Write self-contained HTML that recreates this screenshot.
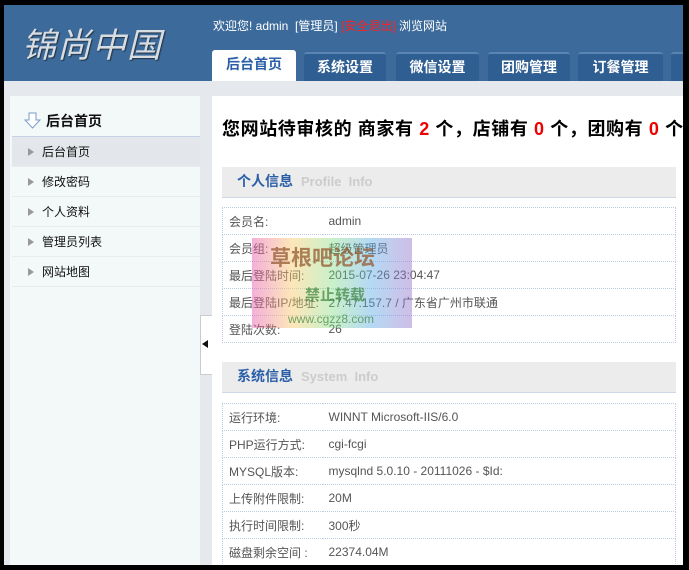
<!DOCTYPE html>
<html><head><meta charset="utf-8"><style>
*{margin:0;padding:0;box-sizing:border-box}
body{width:689px;height:570px;background:#000;position:relative;overflow:hidden;font-family:"Liberation Sans","Noto Sans CJK SC",sans-serif;font-size:12px}
.abs{position:absolute}
#hdr{left:4px;top:5px;width:679px;height:76px;background:#3b6a9b}
#body{left:4px;top:81px;width:679px;height:484px;background:#e5e8ec}
.logo{left:22px;top:18px;font-size:34px;color:#d8dde2;font-style:italic;letter-spacing:1px;text-shadow:1px 1px 1px #234;font-family:"Noto Sans CJK SC",sans-serif}
.wel{left:213px;top:17px;color:#fff;font-size:12px}
.tab{top:52px;height:29px;background:#2f5f92;border-top:2px solid #5a85b3;color:#fff;font-weight:bold;font-size:14px;text-align:center;line-height:26px;border-radius:3px 3px 0 0}
.tab.on{background:#fff;color:#2b60a6;top:50px;height:31px;border:none;line-height:28px}
#side{left:10px;top:96px;width:190px;height:469px;background:#f3f8f8}
.st{left:24px;top:111px;font-size:14px;font-weight:bold;color:#111}
.item{left:12px;width:188px;height:30px;line-height:30px;padding-left:30px;color:#111;border-bottom:1px solid #e8eced}
.item:before{content:"";position:absolute;left:16px;top:11px;border-left:6px solid #999;border-top:4px solid transparent;border-bottom:4px solid transparent}
#main{left:212px;top:96px;width:471px;height:469px;background:#fff}
.h1{left:222px;top:115px;font-size:18px;letter-spacing:0.6px;font-weight:bold;color:#000;white-space:nowrap}
.red{color:#e00}
.sec{left:222px;width:454px;height:31px;background:#ececec;border-bottom:1px solid #cfd8e6;line-height:29px;padding-left:15px;font-size:14px;font-weight:bold;color:#2a5fa8}
.sec span{color:#ccc;font-size:13px;margin-left:8px}
table{position:absolute;left:222px;width:454px;border-collapse:collapse}
td{height:27px;border:1px dotted #bccbe0;color:#555;font-size:12px;padding-left:6px}
td:first-child{width:100px;border-right:none}
td+td{border-left:none}
</style></head><body>
<div id="hdr" class="abs"></div>
<div id="body" class="abs"></div>
<div class="abs logo">锦尚中国</div>
<div class="abs wel">欢迎您! admin &nbsp;[管理员] <span style="color:#f22">[安全退出]</span> 浏览网站</div>
<div class="abs tab on" style="left:212px;width:84px">后台首页</div>
<div class="abs tab" style="left:304px;width:82px">系统设置</div>
<div class="abs tab" style="left:396px;width:83px">微信设置</div>
<div class="abs tab" style="left:488px;width:82px">团购管理</div>
<div class="abs tab" style="left:578px;width:85px">订餐管理</div>
<div class="abs tab" style="left:671px;width:20px"></div>
<div id="side" class="abs"></div>
<svg class="abs" style="left:24px;top:112px" width="18" height="18"><path d="M5 1h7v7h4L8.5 16 1 8h4z" fill="#fff" stroke="#7a9cc6"/></svg>
<div class="abs st" style="left:46px">后台首页</div>
<div class="abs" style="left:12px;top:136px;width:188px;border-top:1px solid #c4d3e6"></div>
<div class="abs item" style="top:137px;background:#e3e6ea">后台首页</div>
<div class="abs item" style="top:167px">修改密码</div>
<div class="abs item" style="top:197px">个人资料</div>
<div class="abs item" style="top:227px">管理员列表</div>
<div class="abs item" style="top:257px">网站地图</div>
<div id="main" class="abs"></div>
<div class="abs" style="left:200px;top:315px;width:12px;height:60px;background:#fff;border:1px solid #ccc;border-right:none"></div>
<div class="abs" style="left:202px;top:340px;border-right:6px solid #111;border-top:4px solid transparent;border-bottom:4px solid transparent"></div>
<div class="abs h1">您网站待审核的 商家有 <span class="red">2</span> 个，店铺有 <span class="red">0</span> 个，团购有 <span class="red">0</span> 个</div>
<div class="abs sec" style="top:167px">个人信息<span>Profile&nbsp; Info</span></div>
<table style="top:207px">
<tr><td>会员名:</td><td>admin</td></tr>
<tr><td>会员组:</td><td>超级管理员</td></tr>
<tr><td>最后登陆时间:</td><td>2015-07-26 23:04:47</td></tr>
<tr><td>最后登陆IP/地址:</td><td>27.47.157.7 / 广东省广州市联通</td></tr>
<tr><td>登陆次数:</td><td>26</td></tr>
</table>
<div class="abs" style="left:252px;top:238px;width:160px;height:90px;background:linear-gradient(90deg,rgba(230,80,170,.45),rgba(250,200,100,.45),rgba(120,220,120,.4),rgba(90,170,230,.45),rgba(150,110,200,.45))"></div>
<div class="abs" style="left:270px;top:242px;font-size:21px;font-weight:bold;color:rgba(150,90,50,.75)">草根吧论坛</div>
<div class="abs" style="left:305px;top:284px;font-size:15px;font-weight:bold;color:rgba(60,130,60,.7)">禁止转载</div>
<div class="abs" style="left:288px;top:312px;font-size:12px;color:rgba(60,130,60,.7)">www.cgzz8.com</div>
<div class="abs sec" style="top:362px">系统信息<span>System&nbsp; Info</span></div>
<table style="top:403px">
<tr><td>运行环境:</td><td>WINNT Microsoft-IIS/6.0</td></tr>
<tr><td>PHP运行方式:</td><td>cgi-fcgi</td></tr>
<tr><td>MYSQL版本:</td><td>mysqlnd 5.0.10 - 20111026 - $Id:</td></tr>
<tr><td>上传附件限制:</td><td>20M</td></tr>
<tr><td>执行时间限制:</td><td>300秒</td></tr>
<tr><td>磁盘剩余空间 :</td><td>22374.04M</td></tr>
</table>
<div class="abs" style="left:0;top:565px;width:689px;height:5px;background:#000"></div>
<div class="abs" style="left:683px;top:0;width:6px;height:570px;background:#000"></div>
</body></html>
